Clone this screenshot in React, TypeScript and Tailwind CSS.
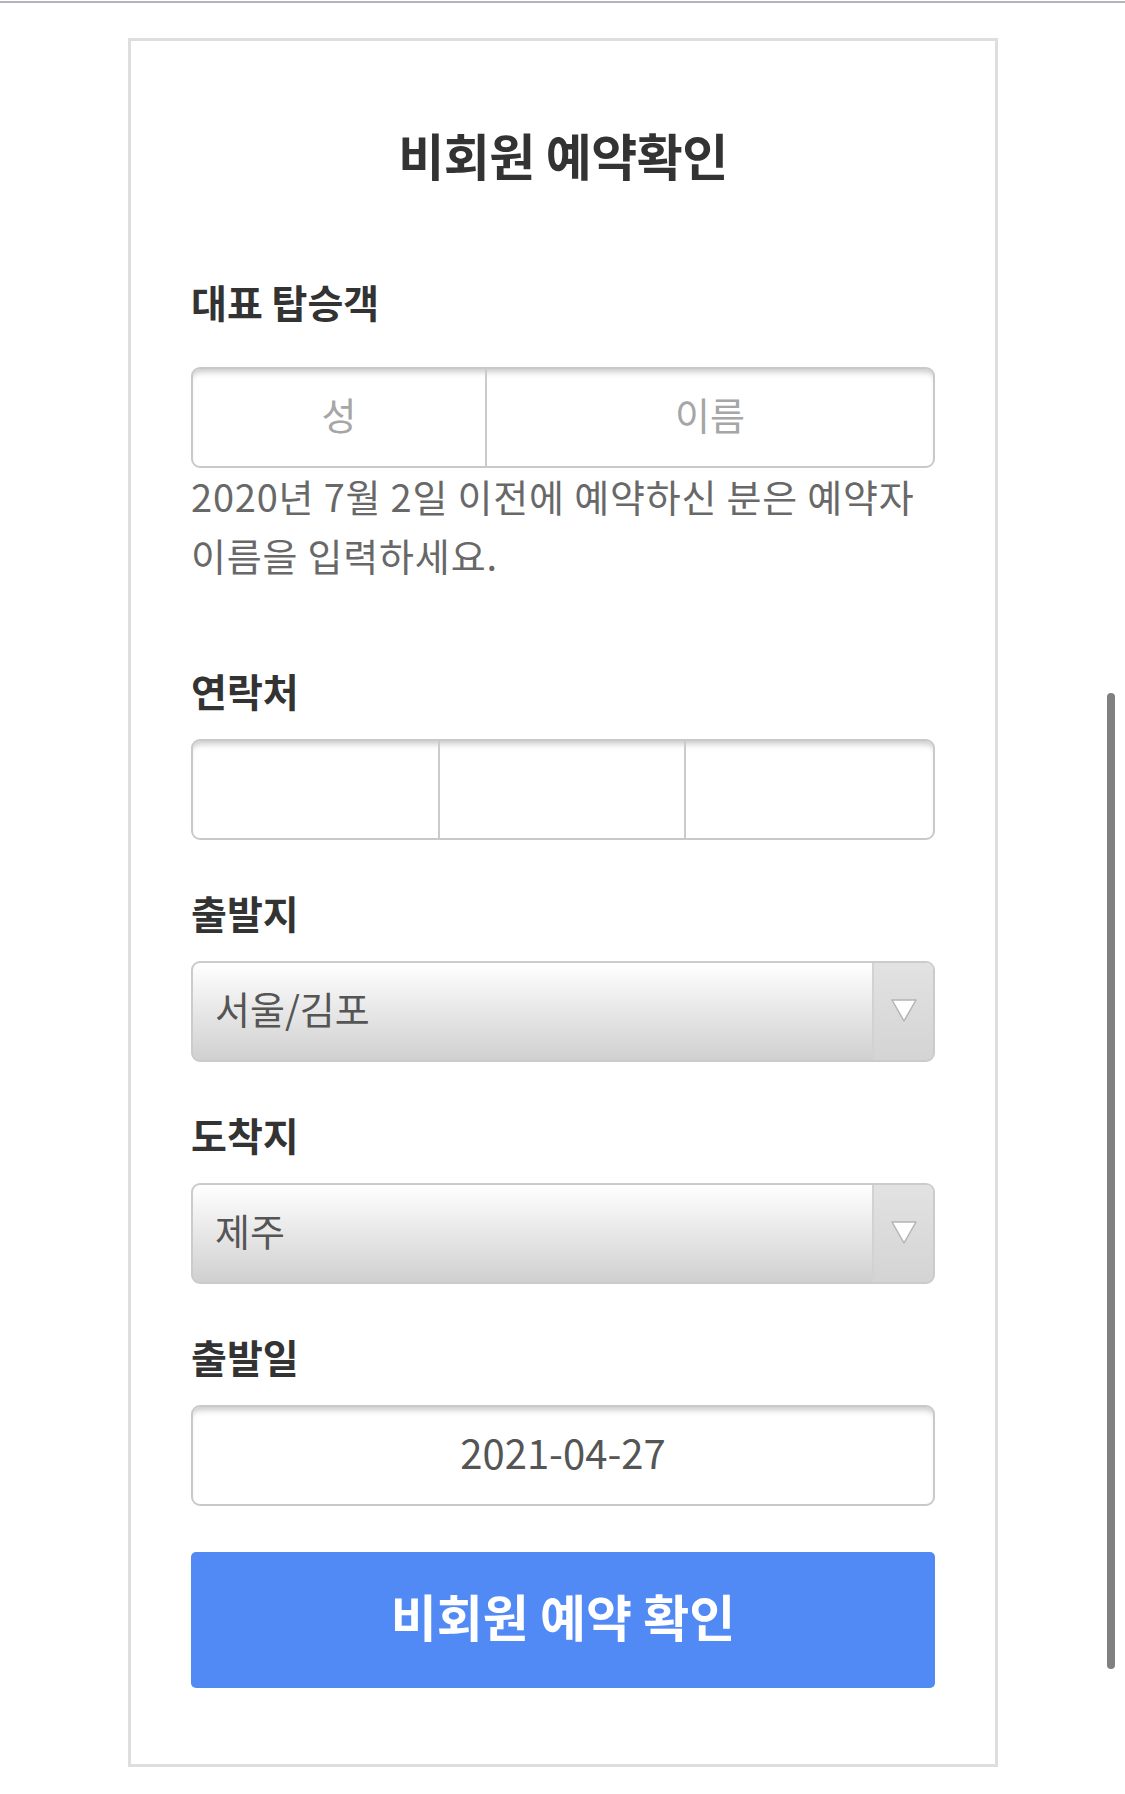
import React from "react";

const font = { fontFamily: '"Noto Sans CJK KR", "Noto Sans", sans-serif' };

function Label({ children, className = "" }: { children: React.ReactNode; className?: string }) {
  return (
    <div className={`text-[39px] leading-[50px] font-bold text-[#333333] ${className}`}>
      {children}
    </div>
  );
}

function Arrow() {
  return (
    <svg width="28" height="26" viewBox="0 0 28 26">
      <polygon points="2,3 26,3 14,24" fill="#ffffff" stroke="#b4b4b4" strokeWidth="1.5" strokeLinejoin="round" />
    </svg>
  );
}

function SelectBox({ value }: { value: string }) {
  return (
    <div className="mt-[24px] h-[101px] flex rounded-[9px] border-2 border-[#cbcbcb] bg-gradient-to-b from-[#ffffff] to-[#d0d0d0] overflow-hidden">
      <div className="flex-1 flex items-center pl-[22px] pb-[8px] text-[38px] text-[#555555]">{value}</div>
      <div className="w-[61px] flex items-center justify-center pb-[4px] border-l-2 border-[#d2d2d2] bg-gradient-to-b from-[#e2e2e2] to-[#d4d4d4]">
        <Arrow />
      </div>
    </div>
  );
}

export default function App() {
  return (
    <div className="relative min-h-[1794px] bg-white" style={font}>
      <div className="pt-px">
        <div className="h-[2px] bg-[#b4b4ba]" />
      </div>
      <div className="ml-[128px] mt-[35px] w-[870px] border-[3px] border-[#dedede] px-[60px] pt-[83px] pb-[76px]">
        <div className="text-center text-[50px] leading-[60px] font-bold text-[#333333] tracking-[-0.5px]">
          비회원 예약확인
        </div>

        <Label className="mt-[92px]">대표 탑승객</Label>
        <div className="mt-[41px] h-[101px] flex rounded-[9px] border-2 border-[#c9c9c9] shadow-[inset_0_7px_6px_-4px_rgba(0,0,0,0.22)] overflow-hidden">
          <div className="w-[294px] flex items-center justify-center pb-[8px] border-r-2 border-[#cbcbcb] text-[38px] text-[#a6a6a6]">성</div>
          <div className="flex-1 flex items-center justify-center pb-[8px] text-[38px] text-[#a6a6a6]">이름</div>
        </div>
        <p className="-mt-[2px] text-[38px] leading-[59px] text-[#686868] tracking-[0.8px]">
          2020년 7월 2일 이전에 예약하신 분은 예약자 이름을 입력하세요.
        </p>

        <Label className="mt-[81px]">연락처</Label>
        <div className="mt-[24px] h-[101px] grid grid-cols-3 rounded-[9px] border-2 border-[#c9c9c9] shadow-[inset_0_7px_6px_-4px_rgba(0,0,0,0.22)] overflow-hidden">
          <div className="border-r-2 border-[#cbcbcb]" />
          <div className="border-r-2 border-[#cbcbcb]" />
          <div />
        </div>

        <Label className="mt-[47px]">출발지</Label>
        <SelectBox value="서울/김포" />

        <Label className="mt-[47px]">도착지</Label>
        <SelectBox value="제주" />

        <Label className="mt-[47px]">출발일</Label>
        <div className="mt-[24px] h-[101px] flex items-center justify-center pb-[8px] rounded-[9px] border-2 border-[#c9c9c9] shadow-[inset_0_7px_6px_-4px_rgba(0,0,0,0.22)] text-[40px] text-[#555555]">
          2021-04-27
        </div>

        <button className="mt-[46px] w-full h-[136px] rounded-[5px] bg-[#518af4] pb-[10px] text-white text-[50px] font-bold flex items-center justify-center">
          비회원 예약 확인
        </button>
      </div>
      <div className="absolute left-[1107px] top-[693px] w-[8px] h-[976px] rounded-full bg-[#808080]" />
    </div>
  );
}
